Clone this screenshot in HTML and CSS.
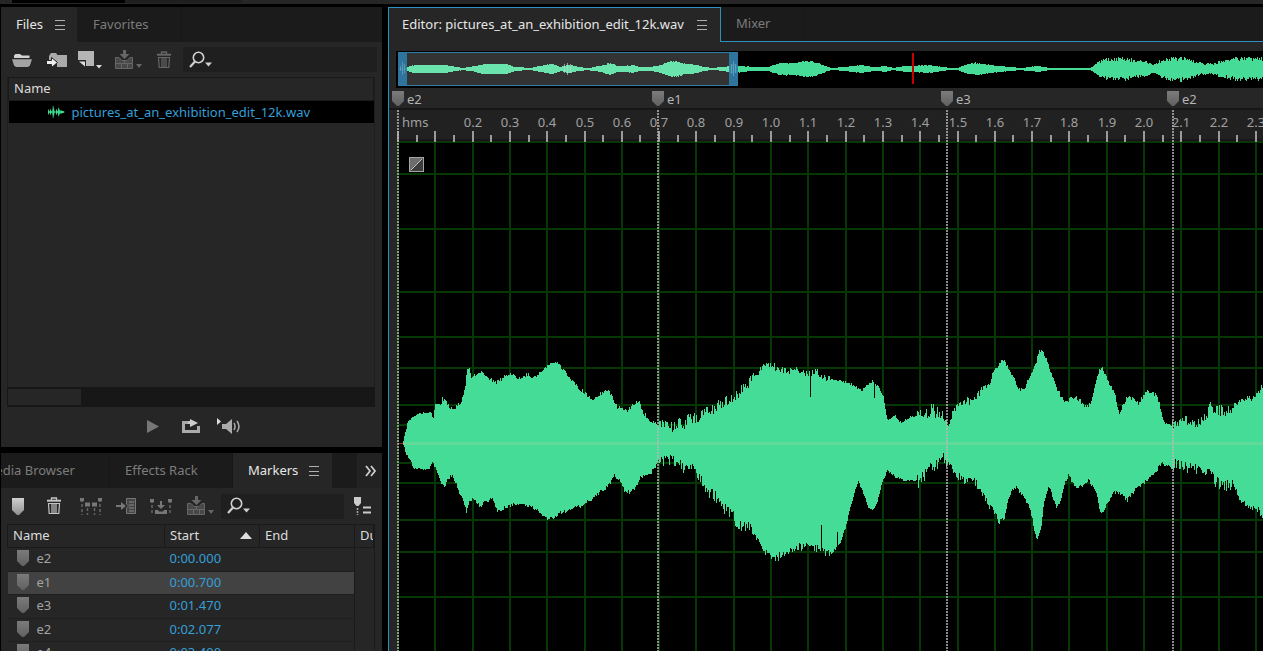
FILE: index.html
```html
<!DOCTYPE html>
<html lang="en">
<head>
<meta charset="utf-8">
<title>Audio editor</title>
<link rel="stylesheet" href="styles.css">
</head>
<body>
<svg class="defs" aria-hidden="true">
  <defs>
    <linearGradient id="metal" x1="0" y1="0" x2="0" y2="1"><stop offset="0" stop-color="#d0d0d0"/><stop offset="1" stop-color="#909090"/></linearGradient>
    <linearGradient id="pin" x1="0" y1="0" x2="0" y2="1"><stop offset="0" stop-color="#7b7b7b"/><stop offset="1" stop-color="#616161"/></linearGradient>
    <symbol id="i-menu" viewBox="0 0 10 12"><path d="M0 1.500h10M0 6.500h10M0 10.500h10" stroke="currentColor"/></symbol>
    <symbol id="i-trash" viewBox="0 0 16 18"><path d="M5.500 3V1h5v2" fill="none" stroke="currentColor" stroke-width="1.300"/><path d="M1 3.700h14" stroke="currentColor" stroke-width="2"/><path d="M2.500 6.500l.7 10h9.600l.7-10zM6 7v9M8 7v9M10 7v9" fill="none" stroke="currentColor" stroke-width="1.200"/></symbol>
    <symbol id="i-insert" viewBox="0 0 28 20"><path d="M9 0h3v4h3.500l-5 5-5-5H9z" fill="currentColor"/><path d="M1.500 7.500h3.500l3 3h5l3-3h2.500v11h-17z" fill="#484848" stroke="currentColor"/><path d="M1 13.500h18M7.500 13.500v5M13.500 13.500v5M10.500 10v3.500" stroke="currentColor"/><path d="M22 14h6l-3 4z" fill="currentColor"/></symbol>
    <symbol id="i-search" viewBox="0 0 24 20"><circle cx="9.500" cy="7.500" r="5.200" fill="none" stroke="currentColor" stroke-width="1.600"/><path d="M6 11.500L1 17" stroke="currentColor" stroke-width="2.200"/><path d="M16 12.500h7l-3.500 4z" fill="currentColor"/></symbol>
    <symbol id="i-pin" viewBox="0 0 12 16"><path d="M0 0h12v11l-5 5H5l-5-5z" fill="url(#pin)"/></symbol>
  </defs>
</svg>

<div class="topstrip" aria-hidden="true"><span class="topstrip-on"></span><span class="topstrip-off"></span></div>

<main class="workspace">
  <div class="sidebar">
    <section class="panel files">
      <div class="tabs" role="tablist">
        <button class="tab tab-active tab-files" role="tab" aria-selected="true">Files <svg class="menu"><use href="#i-menu"/></svg></button>
        <button class="tab tab-favorites" role="tab">Favorites</button>
      </div>
      <div class="toolbar files-tools">
        <button class="tool" aria-label="Open file"><svg width="20" height="16" viewBox="0 0 20 16"><path d="M2 6V3.500L3.500 2H8l2 1.500h7.500V6z" fill="#d2d2d2"/><path d="M0 7.200h20l-2 6-2 1.800H4l-2-1.800z" fill="#a3a3a3"/></svg></button>
        <button class="tool" aria-label="Import file"><svg width="21" height="16" viewBox="0 0 21 16"><path d="M3 4l2-3h5l1.500 2H21v12H11V9L3 8z" fill="#aaa"/><path d="M5.500 5.500l6 5-6 5v-3H.5v-4h5z" fill="#eee" stroke="#262626"/></svg></button>
        <button class="tool" aria-label="New file"><svg width="25" height="18" viewBox="0 0 25 18"><path d="M0 0h16v15H8L8 9H0z" fill="#b5b5b5"/><path d="M1 10.500h6v5z" fill="#ddd"/><path d="M18 14h6l-3 3.500z" fill="#ddd"/></svg></button>
        <button class="tool dim" aria-label="Insert into multitrack"><svg width="28" height="20"><use href="#i-insert"/></svg></button>
        <button class="tool dim" aria-label="Delete"><svg width="16" height="18"><use href="#i-trash"/></svg></button>
        <label class="search"><svg width="24" height="20"><use href="#i-search"/></svg><input type="text" aria-label="Search files"></label>
      </div>
      <div class="file-list">
        <table class="grid">
          <thead><tr><th>Name</th></tr></thead>
          <tbody><tr class="file-row"><td><span class="file"><svg width="18" height="14" viewBox="0 0 18 14"><path d="M1 4l2 3-2 3zM3 3.500l2 3.500-2 3.500zM6 0l1.800 7L6 14 5.200 7zM9 3.500L11 7l-2 3.500zM11.500 2l2 5-2 5-.8-5zM13.500 5l4.500 2-4.500 2z" fill="#3fd98f"/><path d="M1 7h16" stroke="#3fd98f"/></svg>pictures_at_an_exhibition_edit_12k.wav</span></td></tr></tbody>
        </table>
      </div>
      <div class="scroll"><div class="thumb"></div></div>
      <div class="transport">
        <button class="tool" aria-label="Play"><svg width="12" height="13" viewBox="0 0 12 13"><path d="M0 0l12 6.500L0 13z" fill="#777"/></svg></button>
        <button class="tool" aria-label="Loop playback"><svg width="19" height="15" viewBox="0 0 19 15"><path d="M8 3.500H1.500v9h15V7" fill="none" stroke="#aaa" stroke-width="3"/><path d="M6 2.500h2V0l8 4-8 4V5H6z" fill="#ccc"/></svg></button>
        <button class="tool" aria-label="Auto-play"><svg width="24" height="17" viewBox="0 0 24 17"><path d="M0 0l4 3.500L0 7z" fill="#ddd"/><path d="M5 6h4l6-5v15l-6-5H5z" fill="#aaa"/><path d="M17 5q2 3.500 0 7M20 3q4 5.500 0 11" fill="none" stroke="#aaa" stroke-width="1.500"/></svg></button>
      </div>
    </section>

    <section class="panel markers">
      <div class="tabs" role="tablist">
        <button class="tab tab-media" role="tab"><span>Media Browser</span></button>
        <button class="tab tab-rack" role="tab">Effects Rack</button>
        <button class="tab tab-active tab-markers" role="tab" aria-selected="true">Markers <svg class="menu"><use href="#i-menu"/></svg></button>
        <button class="more" aria-label="More panels"><svg width="12" height="12" viewBox="0 0 12 12"><path d="M1 1l4 5-4 5M6 1l4 5-4 5" fill="none" stroke="#ccc" stroke-width="1.800"/></svg></button>
      </div>
      <div class="toolbar marker-tools">
        <button class="tool" aria-label="Add marker"><svg width="12" height="17" viewBox="0 0 12 17"><path d="M0 0h12v12l-5 5H5l-5-5z" fill="url(#metal)"/></svg></button>
        <button class="tool bright" aria-label="Delete marker"><svg width="16" height="18"><use href="#i-trash"/></svg></button>
        <button class="tool" aria-label="Merge markers"><svg width="22" height="17" viewBox="0 0 22 17"><path d="M0 0h4v3l-2 1-2-1zM5 4.500h5v4H5zM12 4.500h5v4h-5zM18 0h4v3l-2 1-2-1z" fill="#777"/><path d="M2 6v11M7.500 10v7M14.500 10v7M20 6v11" stroke="#666" stroke-width="1.500" stroke-dasharray="3 2"/></svg></button>
        <button class="tool" aria-label="Insert into playlist"><svg width="20" height="16" viewBox="0 0 20 16"><path d="M0 8h6" stroke="#777" stroke-width="2"/><path d="M5 4l5 4-5 4z" fill="#777"/><path d="M10.500.5h9v15h-9V10l2-2-2-2z" fill="#444" stroke="#777"/><path d="M13 4h5M13 7h5M13 10h5M13 13h5" stroke="#8a8a8a"/></svg></button>
        <button class="tool" aria-label="Export audio"><svg width="22" height="17" viewBox="0 0 22 17"><path d="M0 1h4v3l-2 1-2-1zM18 1h4v3l-2 1-2-1zM10 3h2v4h3l-4 4-4-4h3z" fill="#777"/><path d="M2 7v10M20 7v10" stroke="#666" stroke-width="1.500" stroke-dasharray="3 2"/><path d="M5 12h3l1 1.500h4l1-1.500h3v4H5z" fill="#777"/></svg></button>
        <button class="tool dim" aria-label="Insert range"><svg width="28" height="20"><use href="#i-insert"/></svg></button>
        <label class="search"><svg width="24" height="20"><use href="#i-search"/></svg><input type="text" aria-label="Search markers"></label>
        <button class="tool" aria-label="Marker options"><svg width="18" height="18" viewBox="0 0 18 18"><path d="M0 0h7v6l-2.500 3h-2L0 6z" fill="#ccc"/><path d="M3.500 11v7" stroke="#aaa" stroke-width="1.500" stroke-dasharray="2 1"/><path d="M9 10.500h8M9 15.500h8" stroke="#ccc" stroke-width="2"/></svg></button>
      </div>
      <div class="marker-list">
        <table class="grid marker-table">
          <colgroup><col class="c-name"><col class="c-time"><col class="c-time"><col></colgroup>
          <thead><tr><th>Name</th><th><span class="sorted">Start <svg width="12" height="7" viewBox="0 0 12 7"><path d="M6 0l6 7H0z" fill="#ddd"/></svg></span></th><th>End</th><th>Du</th></tr></thead>
          <tbody>
            <tr><td><span class="mk"><svg><use href="#i-pin"/></svg>e2</span></td><td class="time">0:00.000</td><td></td><td></td></tr>
            <tr class="selected"><td><span class="mk"><svg><use href="#i-pin"/></svg>e1</span></td><td class="time">0:00.700</td><td></td><td></td></tr>
            <tr><td><span class="mk"><svg><use href="#i-pin"/></svg>e3</span></td><td class="time">0:01.470</td><td></td><td></td></tr>
            <tr><td><span class="mk"><svg><use href="#i-pin"/></svg>e2</span></td><td class="time">0:02.077</td><td></td><td></td></tr>
            <tr><td><span class="mk"><svg><use href="#i-pin"/></svg>e4</span></td><td class="time">0:03.400</td><td></td><td></td></tr>
          </tbody>
        </table>
      </div>
    </section>
  </div>

  <section class="editor">
    <div class="tabs editor-tabs" role="tablist">
      <button class="tab tab-active tab-editor" role="tab" aria-selected="true">Editor: pictures_at_an_exhibition_edit_12k.wav <svg class="menu"><use href="#i-menu"/></svg></button>
      <button class="tab tab-mixer" role="tab">Mixer</button>
    </div>
    <svg class="overview" id="overview" role="img" aria-label="Overview waveform"></svg>
    <svg class="timeline" id="timeline" role="img" aria-label="Waveform timeline"></svg>
  </section>
</main>
<script src="script.js"></script>
</body>
</html>
```
FILE: styles.css
```css
* { box-sizing: border-box; }
body {
  margin: 0;
  height: 100vh;
  display: flex;
  flex-direction: column;
  overflow: hidden;
  background: #000;
  color: #d6d6d6;
  font: 13px/20px "Noto Sans", "Open Sans", sans-serif;
}
button, input { font: inherit; color: inherit; background: none; border: 0; padding: 0; margin: 0; }
svg { display: block; flex: none; }
.defs { position: absolute; width: 0; height: 0; }

.topstrip { flex: none; height: 4px; padding-left: 12px; background: #262626; display: flex; }
.topstrip-on { width: 113px; height: 3px; background: #000; }
.topstrip-off { width: 117px; height: 3px; background: #1f1f1f; }

.workspace {
  flex: 1;
  min-height: 0;
  display: grid;
  grid-template-columns: 381px minmax(0, 1fr);
  grid-template-rows: minmax(0, 1fr);
  gap: 6px;
  padding: 3px 0 0 1px;
}
.sidebar { display: flex; flex-direction: column; gap: 6px; min-height: 0; }
.panel { background: #262626; display: flex; flex-direction: column; }
.markers { flex: 1; min-height: 0; overflow: hidden; }

.tabs { flex: none; display: flex; height: 35px; background: #1b1b1b; }
.tab { display: flex; align-items: center; padding-bottom: 2px; white-space: nowrap; color: #7c7c7c; border-right: 1px solid #171717; }
.tab-active { background: #262626; color: #e6e6e6; border-right: 0; }
.menu { width: 10px; height: 12px; margin-top: 2px; color: #b0b0b0; }
.tab-files { width: 76px; padding-left: 15px; gap: 12px; }
.tab-favorites { width: 105px; padding-left: 16px; }
.tab-media { width: 109px; justify-content: flex-end; padding-right: 34px; overflow: hidden; }
.tab-rack { width: 123px; padding-left: 15px; }
.tab-markers { width: 99px; padding-left: 15px; gap: 11px; }
.more { margin-left: auto; width: 25px; padding-left: 3px; display: grid; place-items: center; background: #222; }

.toolbar { flex: none; display: flex; align-items: center; }
.files-tools { height: 35px; padding: 0 5px 0 11px; }
.files-tools .tool:nth-child(2) { margin-left: 14px; }
.files-tools .tool:nth-child(3) { margin-left: 11px; }
.files-tools .tool:nth-child(4) { margin-left: 11px; }
.files-tools .tool:nth-child(5) { margin-left: 14px; }
.files-tools .search { margin-left: 11px; }
.marker-tools { height: 36px; padding: 0 10px 0 11px; }
.marker-tools .tool { margin-right: 14px; }
.marker-tools .tool:nth-child(1) { margin-right: 22px; }
.marker-tools .tool:nth-child(2) { margin-right: 18px; }
.marker-tools .tool:nth-child(6) { margin-right: 7px; }
.marker-tools .tool:last-child { margin: 0 0 0 10px; }
.dim { color: #666; }
.bright { color: #c4c4c4; }
.search { flex: 1; min-width: 0; height: 25px; display: flex; align-items: center; padding-left: 6px; background: #1f1f1f; color: #d0d0d0; }
.search input { flex: 1; min-width: 0; height: 100%; outline: 0; }

.grid { width: 100%; table-layout: fixed; border-collapse: collapse; }
.grid th { height: 23px; padding: 0 5px 2px; line-height: 19px; text-align: left; font-weight: 400; color: #dcdcdc; border: 1px solid #1a1a1a; overflow: hidden; }
.grid td { padding: 0 5px; }
.file-list { height: 310px; margin: 0 7px 0 6px; border: solid #1e1e1e; border-width: 0 1px; }
.file-row td { height: 22px; background: #000; }
.file { display: flex; align-items: center; gap: 7px; padding-left: 33px; color: #359fd8; }
.scroll { flex: none; height: 20px; margin: 0 7px 0 6px; padding: 1px 0; background: #171717; border: 1px solid #171717; }
.thumb { width: 73px; height: 16px; background: #262626; }
.transport { height: 40px; display: flex; align-items: center; gap: 23px; padding: 0 0 2px 146px; }
.transport .tool:last-child { margin-left: -7px; }

.marker-list { margin: 0 7px 0 6px; border-right: 1px solid #1a1a1a; }
.c-name { width: 157px; }
.c-time { width: 95px; }
.marker-table th:last-child { white-space: nowrap; }
.sorted { display: flex; align-items: center; justify-content: space-between; padding-right: 2px; }
.marker-table td { height: 24px; padding-bottom: 3px; border-bottom: 1px solid #1f1f1f; color: #a4a4a4; }
.marker-table tr:nth-child(even) td { height: 23px; padding-bottom: 2px; }
.marker-table td:last-child { border-bottom: 0; border-left: 1px solid #1a1a1a; }
.marker-table .selected td:not(:last-child) { background: #424242; }
.marker-table .time { color: #359fd8; }
.mk { display: flex; align-items: center; gap: 8px; padding-left: 4px; }
.mk svg { width: 12px; height: 16px; }

.editor { min-width: 0; display: flex; flex-direction: column; background: #262626; border-left: 1px solid #2f8fc0; }
.editor-tabs { border-top: 1px solid #2f8fc0; border-bottom: 1px solid #2f8fc0; }
.editor-tabs::after { content: ""; flex: 1; margin-top: -1px; border-top: 1px solid #1b1b1b; }
.tab-editor { width: 332px; margin-bottom: -1px; padding-left: 13px; justify-content: space-between; padding-right: 13px; border-right: 1px solid #2f8fc0; }
.tab-mixer { width: 84px; margin-top: -1px; padding-left: 15px; background: #1b1b1b; }
.overview { width: 100%; height: 37px; margin-top: 9px; }
.timeline { width: 100%; flex: 1; min-height: 0; font-size: 13px; }
.ruler-text { fill: #a0a0a0; }
.pin-text { fill: #b4b4b4; }
```
FILE: script.js
```js
const NS = "http://www.w3.org/2000/svg";
function add(parent, tag, attrs, text) {
  const el = document.createElementNS(NS, tag);
  for (const k in attrs) el.setAttribute(k, attrs[k]);
  if (text) el.textContent = text;
  parent.appendChild(el);
  return el;
}

/* Envelopes are "x,y" pairs in window coordinates. */
const TOP = "403,442 404,436 407,424 410,419 416,415 422,413 430,412 433,418 435,403 440,405 442,399 446,401 449,408 455,408 461,401 465,385 467,368 469,367 471,376 477,373 481,372 488,378 495,383 502,378 510,374 518,378 527,374 533,378 540,373 547,367 553,363 558,364 566,373 575,385 585,394 593,399 602,392 607,390 611,395 617,407 627,410 636,402 639,402 641,410 650,422 655,422 658,425 666,424 675,428 680,422 684,426 688,418 700,416 708,409 715,409 720,402 728,399 737,394 745,386 754,376 762,367 767,365 775,367 785,372 795,370 803,374 818,372 825,378 835,380 845,382 855,386 861,391 867,385 872,381 878,387 883,397 887,420 895,416 901,423 910,417 917,416 925,415 932,411 939,412 942,418 947,425 951,417 957,406 965,401 972,402 978,393 985,386 991,380 994,368 999,361 1003,360 1008,368 1015,381 1018,390 1024,388 1030,376 1036,362 1039,350 1042,350 1047,362 1053,380 1059,393 1064,402 1075,397 1080,401 1084,407 1091,403 1095,382 1099,371 1102,367 1107,380 1114,392 1119,414 1124,403 1128,395 1138,404 1146,391 1153,393 1157,396 1163,420 1171,427 1175,421 1180,423 1190,420 1198,424 1207,415 1210,406 1220,410 1230,410 1240,401 1255,397 1263,384 1300,378";
const BOTTOM = "403,444 406,455 410,460 413,468 425,470 429,469 432,462 436,470 440,481 444,487 447,481 451,475 455,482 459,494 463,500 466,511 470,500 474,499 480,508 485,500 492,500 498,512 505,507 515,504 522,503 530,507 538,511 545,518 550,519 560,513 570,510 580,506 590,500 600,492 607,487 614,476 619,480 624,490 630,493 634,489 640,477 650,474 658,462 662,460 670,461 677,463 687,470 695,468 700,479 707,492 715,496 723,507 733,517 738,525 750,528 760,546 770,557 776,558 785,553 795,548 805,546 815,548 825,553 832,553 840,542 845,528 850,508 855,490 858,481 863,493 868,508 873,510 877,502 882,482 887,470 895,477 905,481 917,480 920,480 925,472 935,468 945,459 950,465 957,476 965,481 972,478 980,490 988,503 995,515 999,521 1004,518 1008,500 1014,486 1020,492 1030,509 1034,529 1037,540 1041,526 1044,500 1048,486 1052,495 1055,506 1059,506 1062,492 1068,474 1075,488 1082,486 1088,480 1095,490 1099,508 1102,513 1108,502 1113,491 1120,494 1127,500 1135,490 1145,482 1155,472 1162,462 1172,470 1175,464 1185,467 1197,469 1205,469 1215,482 1223,485 1233,485 1240,500 1250,508 1258,510 1263,517 1300,520";
const MINI = "399,1 406,1 409,3 415,4 430,4 445,4 455,2 463,1 475,3 485,5 495,5 505,5 515,2 530,1 540,3 552,5 560,2 568,4 580,2 587,1 600,3 610,6 617,3 625,3 632,4 640,2 650,2 660,4 670,8 678,7 685,5 690,5 700,3 710,1 725,2 732,5 740,3 755,2 768,2 780,6 795,6 805,8 815,7 825,3 831,1 845,2 860,4 875,2 885,3 893,1 905,3 915,3 925,4 935,3 950,1 957,1 965,4 975,6 990,4 1010,2 1020,1 1037,3 1050,1 1070,1 1090,1 1096,5 1103,9 1115,10 1125,10 1135,8 1145,7 1153,4 1160,8 1175,11 1185,10 1195,7 1203,5 1212,5 1225,8 1235,10 1300,10";

function sampler(data) {
  const pts = data.split(" ").map(p => p.split(",").map(Number));
  return x => {
    for (let i = 1; i < pts.length; i++) {
      if (x <= pts[i][0]) {
        const [x0, y0] = pts[i - 1], [x1, y1] = pts[i];
        return y0 + (y1 - y0) * (x - x0) / (x1 - x0);
      }
    }
    return pts[pts.length - 1][1];
  };
}
let seed = 41;
function rnd() { seed = (seed * 16807) % 2147483647; return seed / 2147483647 * 2 - 1; }
function rough(x) {
  if (x < 440) return 1;
  if (x < 658) return 2;
  if (x < 755) return 6;
  if (x < 830) return 4;
  if (x < 917) return 1;
  if (x < 947) return 8;
  if (x < 1000) return 4;
  if (x < 1172) return 2;
  if (x < 1235) return 6;
  return 3;
}
const NOTCH_TOP = { 810: 397, 874: 398 };
const NOTCH_BOTTOM = { 821: 525, 837: 532 };

/* One column per pixel, each a step of the outline. */
function outline(from, to, topAt, bottomAt) {
  let up = "", down = "";
  for (let x = from; x < to; x++) {
    up += `L${x} ${topAt(x)}H${x + 1}`;
    down = `L${x + 1} ${bottomAt(x)}H${x}` + down;
  }
  return "M" + (up + down).slice(1) + "Z";
}

const END = Math.max(1263, window.innerWidth);

/* Overview */
const ov = add(document.getElementById("overview"), "g", { transform: "translate(-389 -51)", "shape-rendering": "crispEdges" });
add(ov, "rect", { x: 396, y: 51, width: END, height: 37, fill: "#000" });
const mini = sampler(MINI);
const miniH = x => { const h = mini(x); return Math.max(1, Math.round(h + rnd() * h * (x > 1094 ? 0.22 : 0.1))); };
add(ov, "path", { d: outline(399, END, x => 69 - miniH(x), x => 69 + miniH(x)), fill: "#46dc98" });
add(ov, "rect", { x: 398, y: 52, width: 340, height: 34, fill: "#fff", opacity: 0.2 });
add(ov, "path", { d: "M398 52.500H738M398 85.500H738", stroke: "#2c7fa9" });
add(ov, "path", { d: "M398 52h9v34h-9zM729 52h9v34h-9z", fill: "#2e7ba6", opacity: 0.92 });
add(ov, "path", { d: "M400.500 66v5M402.500 62v13M404.500 64v9M731.500 64v9M733.500 61v15M735.500 64v9", stroke: "#8fb6cc", opacity: 0.5 });
add(ov, "path", { d: "M564.500 64v9M567.500 63v12M570.500 64v9", stroke: "#b9d8cf", opacity: 0.7 });
add(ov, "rect", { x: 912, y: 53, width: 2, height: 31, fill: "#c80000" });

/* Timeline */
const tl = add(document.getElementById("timeline"), "g", { transform: "translate(-389 -88)" });
add(tl, "rect", { x: 389, y: 108, width: END, height: 2, fill: "#171717" });
add(tl, "rect", { x: 397, y: 110, width: END, height: 30, fill: "#212121" });
add(tl, "rect", { x: 397, y: 139, width: END, height: 2, fill: "#1c141c" });
add(tl, "rect", { x: 397, y: 141, width: END, height: 2000, fill: "#000" });

const crisp = add(tl, "g", { "shape-rendering": "crispEdges" });
const STEP = 37.3;
let columns = "", ticks = "";
for (let i = 0; 398 + i * STEP < END; i++) {
  const x = Math.round(398 + i * STEP);
  columns += `M${x} 141V2000`;
  ticks += `M${x} 131V142`;
  const half = Math.round(398 + (i + 0.5) * STEP);
  ticks += `M${half} 135V142`;
  if (i > 1) {
    add(tl, "text", { class: "ruler-text", x: x, y: 127, "text-anchor": "middle" }, (i / 10).toFixed(1));
  }
}
add(tl, "text", { class: "ruler-text", x: 402, y: 127 }, "hms");
let rows = "";
for (const y of [142, 174, 229, 292, 337, 368, 405, 425, 463, 483, 520, 552, 597]) rows += `M398 ${y}H${END}`;
add(crisp, "path", { d: columns + rows, stroke: "#063806", "stroke-width": 2 });
add(crisp, "path", { d: ticks, stroke: "#9a9a9a", "stroke-width": 2 });

const top_ = sampler(TOP), bottom = sampler(BOTTOM);
add(crisp, "path", {
  d: outline(403, END,
    x => NOTCH_TOP[x] || Math.min(441, Math.round(top_(x) + rnd() * rough(x))),
    x => NOTCH_BOTTOM[x] || Math.max(445, Math.round(bottom(x) + rnd() * rough(x)))),
  fill: "#45dc98"
});
add(crisp, "path", { d: `M403 443.500H${END}`, stroke: "#62da97", "stroke-width": 3 });
add(crisp, "path", { d: "M398 443.500h5", stroke: "#b02020" });

/* Fade handle */
add(crisp, "rect", { x: 409, y: 157, width: 15, height: 15, fill: "#a5a5a5" });
add(crisp, "path", { d: "M410 158h13L410 171z", fill: "#6c6c6c" });
add(crisp, "path", { d: "M423 158v13h-13z", fill: "#3c3c3c" });
add(tl, "path", { d: "M411 170L422 159", stroke: "#c0c0c0", "stroke-width": 1 });

/* Markers */
for (const [x, name] of [[398, "e2"], [658, "e1"], [947, "e3"], [1173, "e2"]]) {
  add(crisp, "path", { d: `M${x} 110V2000`, stroke: "#b9b9b9", "stroke-width": 2, "stroke-dasharray": "2 1", opacity: 0.75 });
  add(tl, "path", { d: `M${x - 6} 91h12v10l-5 5h-2l-5-5z`, fill: "url(#pin)" });
  add(tl, "text", { class: "pin-text", x: x + 9, y: 104 }, name);
}
```
